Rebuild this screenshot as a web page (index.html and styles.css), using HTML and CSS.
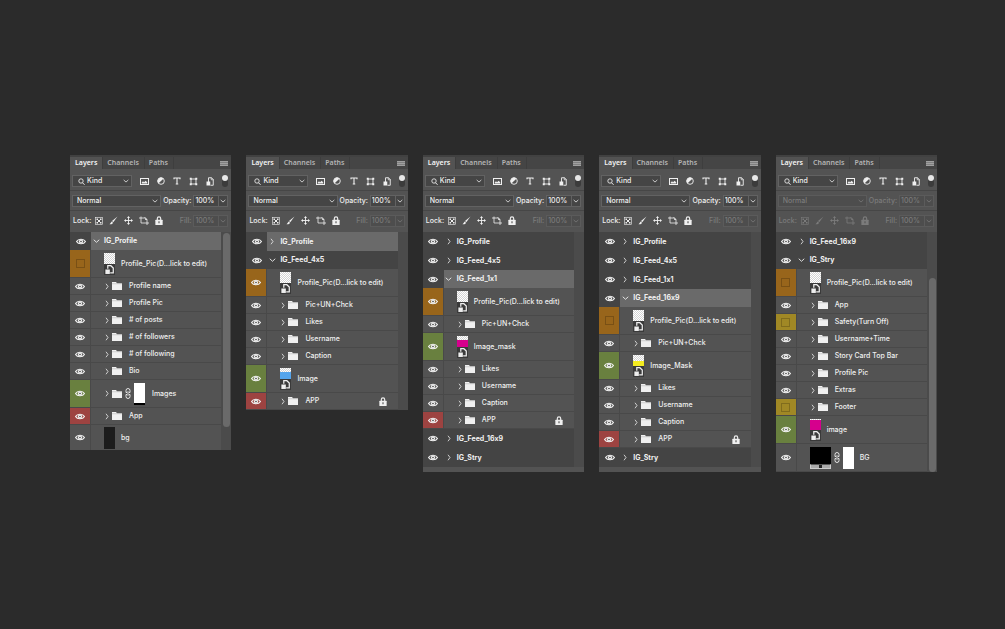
FILE: index.html
```html
<!DOCTYPE html>
<html lang="en">
<head>
  <meta charset="UTF-8"/>
  <meta name="viewport" content="width=device-width, initial-scale=1.0"/>
  <title>Layers</title>
  <link rel="stylesheet" href="styles.css">
</head>
<body>

  <svg class="sprite" aria-hidden="true">
    <symbol id="eye" viewBox="0 0 18 12">
      <path d="M1 6C4 0.6 14 0.6 17 6C14 11.4 4 11.4 1 6Z" fill="none" stroke="currentColor" stroke-width="2.2"/>
      <circle cx="9" cy="6" r="3.8" fill="currentColor"/>
      <circle cx="9" cy="6" r="1.5" fill="#444"/>
    </symbol>
    <symbol id="right" viewBox="0 0 8 14"><path d="M2 1.5L6 7L2 12.5" fill="none" stroke="currentColor" stroke-width="1.6"/></symbol>
    <symbol id="down" viewBox="0 0 14 8"><path d="M1.5 1.5L7 6.5L12.5 1.5" fill="none" stroke="currentColor" stroke-width="1.8"/></symbol>
    <symbol id="folder" viewBox="0 0 20 16"><path d="M0 0H8L10 2.5H20V16H0Z" fill="currentColor"/><path d="M0 3.5H20" stroke="#aaa" stroke-width="1"/></symbol>
    <symbol id="lock" viewBox="0 0 14 16">
      <path d="M4 7V4.5a3 3 0 0 1 6 0V7" fill="none" stroke="currentColor" stroke-width="2"/>
      <rect x="0.5" y="6.5" width="13" height="9.5" rx="1" fill="currentColor"/>
      <path d="M7 9.5V13" stroke="#555" stroke-width="2"/>
    </symbol>
    <symbol id="link" viewBox="0 0 12 22">
      <path d="M2 9V5a4 4 0 0 1 8 0v4M2 13v4a4 4 0 0 0 8 0v-4M6 6.5v9M2 9h2M8 9h2M2 13h2M8 13h2" fill="none" stroke="currentColor" stroke-width="1.8"/>
    </symbol>
    <symbol id="search" viewBox="0 0 14 14"><circle cx="6" cy="6" r="4.4" fill="none" stroke="currentColor" stroke-width="1.7"/><path d="M9 9.5L13 13.5" stroke="currentColor" stroke-width="2"/></symbol>
    <symbol id="pixel" viewBox="0 0 18 14"><rect x="1" y="1" width="16" height="12" fill="none" stroke="currentColor" stroke-width="2"/><path d="M3.5 11V9L6 6.5L8 8.5L11.5 5.5L14.5 9V11Z" fill="currentColor"/></symbol>
    <symbol id="adjust" viewBox="0 0 16 16"><circle cx="8" cy="8" r="6.6" fill="none" stroke="currentColor" stroke-width="1.8"/><path d="M12.7 3.3A6.6 6.6 0 0 0 3.3 12.7Z" fill="currentColor"/></symbol>
    <symbol id="type" viewBox="0 0 16 16"><path d="M2 4.5V2H14V4.5M8 2V14M5.5 14H10.5" fill="none" stroke="currentColor" stroke-width="2.2"/></symbol>
    <symbol id="shape" viewBox="0 0 18 18"><path d="M4 4H14V14H4Z" fill="none" stroke="currentColor" stroke-width="1.8"/><path d="M1.5 1.5h4v4h-4zM12.5 1.5h4v4h-4zM1.5 12.5h4v4h-4zM12.5 12.5h4v4h-4z" fill="currentColor"/></symbol>
    <symbol id="smart" viewBox="0 0 16 18"><path d="M5 10V1.5H11L14.5 5V16.5H9" fill="none" stroke="currentColor" stroke-width="1.8"/><path d="M10.5 1V5.5H15" fill="none" stroke="currentColor" stroke-width="1.4"/><path d="M1 9H8.5V17H1Z" fill="currentColor"/></symbol>
    <symbol id="checker" viewBox="0 0 16 16"><rect x="1" y="1" width="14" height="14" fill="none" stroke="currentColor" stroke-width="1.2"/><path d="M3 3h3v3H3zM10 3h3v3h-3zM6 6h4v4H6zM3 10h3v3H3zM10 10h3v3h-3z" fill="currentColor"/></symbol>
    <symbol id="brush" viewBox="0 0 18 18"><path d="M17 1L8.5 12.5L6 10Z" fill="currentColor"/><path d="M5.5 11L8 13.3C7 16.5 4 17 1 16.5C3.5 15 3 12.5 5.5 11Z" fill="currentColor"/></symbol>
    <symbol id="move" viewBox="0 0 18 18"><path d="M9 2V16M2 9H16" stroke="currentColor" stroke-width="1.8"/><path d="M9 0L12 4H6ZM9 18L12 14H6ZM0 9L4 6V12ZM18 9L14 6V12Z" fill="currentColor"/></symbol>
    <symbol id="artboard" viewBox="0 0 20 18"><path d="M4 1V14M0 4H12M4 14H20M16 8V18" fill="none" stroke="currentColor" stroke-width="1.6"/><path d="M11 2L16 7" stroke="currentColor" stroke-width="1.6"/><path d="M12.5 8V3.5L17 8Z" fill="currentColor"/></symbol>
    <symbol id="object" viewBox="0 0 16 16"><rect width="16" height="16" fill="#3a3a3a"/><path d="M5.5 7V2.5H10L13.5 6V13H9" fill="none" stroke="#eee" stroke-width="1.8"/><path d="M2 8H8.5V14.5H2Z" fill="#eee"/></symbol>
  </svg>

  <main class="board" id="board"></main>

  <script src="script.js"></script>
</body>
</html>
```
FILE: styles.css
```css
* {
  box-sizing: border-box;
  margin: 0;
  padding: 0;
}

body {
  font-family: Inter, "Liberation Sans", sans-serif;
  font-size: 7px;
  font-weight: 500;
  font-variant-ligatures: no-contextual;
  line-height: 10px;
  background: #2b2b2b;
  color: #f0f0f0;
  min-height: 100vh;
}

button, input, select {
  font: inherit;
  color: inherit;
  background: none;
  border: none;
  border-radius: 0;
  appearance: none;
  min-width: 0;
}

button {
  display: flex;
  align-items: center;
  justify-content: center;
}

select:disabled, input:disabled {
  opacity: 1;
}

svg {
  display: block;
  flex: none;
}

.sprite {
  display: none;
}

.board {
  display: flex;
  align-items: flex-start;
  gap: 15px;
  padding: 155px 68px 40px 70px;
}

.panel {
  flex: 1;
  min-width: 161px;
  background: #535353;
  border-top: 2px solid #414141;
}

/* tabs */
.tabs {
  display: flex;
  height: 12px;
  background: #454545;
  font-family: "Noto Sans", sans-serif;
  font-weight: 600;
  color: #b4b4b4;
}

.tab {
  padding: 0 5px 0 4px;
  border-right: 1px solid #3e3e3e;
}

.tab.active {
  padding: 0 5px;
  background: #535353;
  color: #f5f5f5;
}

.menu-btn {
  margin-left: auto;
  padding: 0 3px;
}

.menu-btn span {
  width: 8px;
  height: 5px;
  background: repeating-linear-gradient(#a0a0a0 0 1px, #808080 1px 2px);
}

/* toolbars */
.bar {
  display: flex;
  align-items: center;
  height: 20px;
  padding: 0 3px 0 2px;
  border-bottom: 1px solid #464646;
}

.filter-bar {
  height: 22px;
  padding-top: 3px;
}

.lock-bar {
  height: 21px;
  padding-bottom: 2px;
  border-bottom: none;
}

.field {
  display: flex;
  align-items: center;
  height: 12px;
  background: #454545;
  border: 1px solid #626262;
}

.field select {
  flex: 1;
  height: 10px;
}

.kind {
  width: 60px;
  padding: 0 2px 0 5px;
  gap: 2px;
}

.blend {
  flex: 1;
  padding: 0 2px 0 4px;
  margin-right: 2px;
}

.filters {
  display: flex;
  flex: 1;
  align-items: center;
  justify-content: space-between;
  padding-left: 8px;
}

.switch {
  width: 6px;
  height: 12px;
  border-radius: 3px;
  background: #3c3c3c;
  align-items: flex-start;
}

.switch span {
  width: 6px;
  height: 6px;
  border-radius: 3px;
  background: #e8e8e8;
}

.percent {
  width: 35px;
  margin-left: 2px;
}

.percent input {
  width: 24px;
  height: 10px;
  padding-left: 1px;
}

.percent button {
  flex: 1;
  height: 10px;
  border-left: 1px solid #626262;
}

.locks {
  display: flex;
  flex: 1;
  align-items: center;
  gap: 6px;
  padding-left: 4px;
}

.lock-label {
  padding-left: 1px;
}

.off {
  color: #7b7b7b;
}

.off .field, .field.off {
  background: #4d4d4d;
  border-color: #5b5b5b;
}

.off .percent button, .percent.off button {
  border-color: #5b5b5b;
}

/* layer list */
.body {
  display: flex;
  padding-bottom: 5px;
}

.body.flush {
  padding-bottom: 0;
}

.list {
  flex: 1;
  list-style: none;
  min-width: 0;
}

.track {
  width: 10px;
  padding: 1px 1px 0 2px;
  background: #4b4b4b;
}

.thumb {
  width: 7px;
  border-radius: 4px;
  background: #6a6a6a;
}

.row {
  display: flex;
  height: 17px;
  border-bottom: 1px solid #494949;
}

.row.tall {
  height: 28px;
}

.row.cut {
  height: 25px;
  overflow: hidden;
  border-bottom: none;
}

.row.group {
  height: 18px;
  font-weight: 700;
  background: #444;
  border-bottom: none;
}

.row.closed {
  height: 19px;
}

.row.selected .cell {
  background: #6a6a6a;
}

.eye {
  width: 21px;
  border-right: 1px solid #494949;
}

.group .eye {
  border-right: none;
}

.orange .eye { background: #98651b; }
.green .eye { background: #69803f; }
.red .eye { background: #9d4341; }
.yellow .eye { background: #a08825; }

.blank {
  width: 9px;
  height: 9px;
  border: 1px solid rgba(0, 0, 0, 0.2);
}

.cell {
  display: flex;
  flex: 1;
  align-items: center;
  min-width: 0;
  padding-left: 13px;
  white-space: nowrap;
}

.group .cell {
  padding-left: 1px;
}

.arrow {
  width: 6px;
  height: 10px;
  margin-right: 2px;
}

.group .arrow {
  width: 8px;
  margin-right: 4px;
}

.name {
  padding-left: 7px;
}

.group .name {
  padding-left: 0;
}

.has-thumb .name {
  padding-left: 6px;
}

.has-link .link {
  margin: 0 3px;
}

.locked {
  margin-left: auto;
  margin-right: 11px;
}

.pic {
  display: flex;
  flex: none;
  flex-direction: column;
  justify-content: flex-end;
  width: 11px;
  height: 22px;
  background: #333;
}

.pic.art {
  background: repeating-conic-gradient(#d4d4d4 0 25%, #fff 0 50%) 0 0 / 2px 2px;
}

.swatch {
  flex: 1;
  margin-top: 4px;
}

.swatch.blue { background: #55a5ec; }
.swatch.pink { background: #d6008d; }
.swatch.yolk { background: #f4ec20; margin-top: 6px; }
.swatch.magenta { background: #d6008d; margin-top: 1px; }

.pic.mask {
  background: #fff;
}

.pic.mask.foot {
  border-bottom: 2px solid #000;
}

.pic.dark {
  background: #1c1c1c;
}

.pic.wide {
  width: 21px;
  background: #000;
}

.slider {
  height: 5px;
  border: 1px solid #ccc;
  border-top-color: #555;
  background: linear-gradient(90deg, #aaa 40%, #222 40% 60%, #aaa 60%);
}
```
FILE: script.js
```js
const icon = (id, w, h, cls = "") =>
  `<svg class="${cls}" width="${w}" height="${h}" aria-hidden="true"><use href="#${id}"/></svg>`;

const group = (name, state = "closed") => ({ type: "group", name, state });
const sub = (name, opts = {}) => ({ type: "sub", name, ...opts });
const pic = (name, opts = {}) => ({ type: "pic", name, ...opts });

const profilePic = (hidden) => pic("Profile_Pic(D...lick to edit)", { color: "orange", hidden, swatch: "" });
const app = sub("APP", { color: "red", locked: true });

const panels = [
  {
    thumb: [0, 194], flush: true,
    rows: [
      group("IG_Profile", "open selected"), profilePic(true),
      sub("Profile name"), sub("Profile Pic"), sub("# of posts"), sub("# of followers"),
      sub("# of following"), sub("Bio"), sub("Images", { color: "green", mask: true }),
      sub("App", { color: "red" }), pic("bg", { kind: "dark" })
    ]
  },
  {
    flush: true,
    rows: [
      group("IG_Profile", "closed selected"), group("IG_Feed_4x5", "open"), profilePic(false),
      sub("Pic+UN+Chck"), sub("Likes"), sub("Username"), sub("Caption"),
      pic("Image", { color: "green", swatch: "blue" }), app
    ]
  },
  {
    rows: [
      group("IG_Profile"), group("IG_Feed_4x5"), group("IG_Feed_1x1", "open selected"), profilePic(false),
      sub("Pic+UN+Chck"), pic("Image_mask", { color: "green", swatch: "pink" }),
      sub("Likes"), sub("Username"), sub("Caption"), app, group("IG_Feed_16x9"), group("IG_Stry")
    ]
  },
  {
    rows: [
      group("IG_Profile"), group("IG_Feed_4x5"), group("IG_Feed_1x1"),
      group("IG_Feed_16x9", "open selected"), profilePic(true),
      sub("Pic+UN+Chck"), pic("Image_Mask", { color: "green", swatch: "yolk" }),
      sub("Likes"), sub("Username"), sub("Caption"), app, group("IG_Stry")
    ]
  },
  {
    thumb: [45, 194], off: true, flush: true,
    rows: [
      group("IG_Feed_16x9"), group("IG_Stry", "open"), profilePic(true),
      sub("App"), sub("Safety(Turn Off)", { color: "yellow", hidden: true }), sub("Username+Time"),
      sub("Story Card Top Bar"), sub("Profile Pic"), sub("Extras"),
      sub("Footer", { color: "yellow", hidden: true }),
      pic("image", { color: "green", swatch: "magenta" }), pic("BG", { kind: "fill" })
    ]
  }
];

function rowContent(row) {
  if (row.type === "group") {
    const arrow = row.state.includes("open") ? icon("down", 7, 4) : icon("right", 4, 7);
    return `<button class="arrow" aria-label="Toggle ${row.name}">${arrow}</button>`;
  }
  if (row.type === "sub") {
    const mask = row.mask ? icon("link", 6, 11, "link") + `<span class="pic mask foot"></span>` : "";
    return `<button class="arrow" aria-label="Toggle ${row.name}">${icon("right", 4, 7)}</button>` +
      icon("folder", 10, 8) + mask;
  }
  if (row.kind === "dark") return `<span class="pic dark"></span>`;
  if (row.kind === "fill") {
    return `<span class="pic wide"><span class="slider"></span></span>` +
      icon("link", 6, 11, "link") + `<span class="pic mask"></span>`;
  }
  return `<span class="pic art"><span class="swatch ${row.swatch}"></span>${icon("object", 11, 11)}</span>`;
}

function renderRow(row) {
  const cls = ["row"];
  if (row.type === "group") cls.push("group", row.state);
  if (row.type === "pic" || row.mask) cls.push("tall");
  if (row.type === "pic") cls.push("has-thumb");
  if (row.mask || row.kind === "fill") cls.push("has-link");
  if (row.kind === "dark") cls.push("cut");
  if (row.color) cls.push(row.color);

  return `
    <li class="${cls.join(" ")}">
      <button class="eye" aria-label="Visibility of ${row.name}">${row.hidden ? '<span class="blank"></span>' : icon("eye", 10, 7)}</button>
      <div class="cell">
        ${rowContent(row)}<span class="name">${row.name}</span>
        ${row.locked ? icon("lock", 8, 9, "locked") : ""}
      </div>
    </li>`;
}

function renderPanel(panel, i) {
  const off = panel.off ? "off" : "";
  const dis = panel.off ? "disabled" : "";
  return `
    <section class="panel">
      <div class="tabs">
        <button class="tab active">Layers</button>
        <button class="tab">Channels</button>
        <button class="tab">Paths</button>
        <button class="menu-btn" aria-label="Panel menu"><span></span></button>
      </div>
      <div class="bar filter-bar">
        <div class="field kind">
          ${icon("search", 7, 7)}
          <select aria-label="Filter type"><option>Kind</option></select>
          ${icon("down", 6, 4)}
        </div>
        <div class="filters">
          <button aria-label="Pixel layers">${icon("pixel", 9, 7)}</button>
          <button aria-label="Adjustment layers">${icon("adjust", 8, 8)}</button>
          <button aria-label="Type layers">${icon("type", 8, 8)}</button>
          <button aria-label="Shape layers">${icon("shape", 9, 9)}</button>
          <button aria-label="Smart objects">${icon("smart", 8, 9)}</button>
          <button class="switch" aria-label="Filtering on or off"><span></span></button>
        </div>
      </div>
      <div class="bar ${off}">
        <div class="field blend">
          <select aria-label="Blend mode" ${dis}><option>Normal</option></select>
          ${icon("down", 6, 4)}
        </div>
        <label for="opacity-${i}">Opacity:</label>
        <div class="field percent">
          <input id="opacity-${i}" type="text" value="100%" ${dis}>
          <button aria-label="Opacity slider" ${dis}>${icon("down", 6, 4)}</button>
        </div>
      </div>
      <div class="bar lock-bar ${off}">
        <span class="lock-label">Lock:</span>
        <div class="locks">
          <button aria-label="Lock transparent pixels">${icon("checker", 8, 8)}</button>
          <button aria-label="Lock image pixels">${icon("brush", 9, 9)}</button>
          <button aria-label="Lock position">${icon("move", 9, 9)}</button>
          <button aria-label="Lock artboard nesting">${icon("artboard", 10, 9)}</button>
          <button aria-label="Lock all">${icon("lock", 8, 9)}</button>
        </div>
        <label class="off" for="fill-${i}">Fill:</label>
        <div class="field percent off">
          <input id="fill-${i}" type="text" value="100%" disabled>
          <button aria-label="Fill slider" disabled>${icon("down", 6, 4)}</button>
        </div>
      </div>
      <div class="body ${panel.flush ? "flush" : ""}">
        <ul class="list">${panel.rows.map(renderRow).join("")}</ul>
        <div class="track">
          ${panel.thumb ? `<div class="thumb" style="margin-top: ${panel.thumb[0]}px; height: ${panel.thumb[1]}px"></div>` : ""}
        </div>
      </div>
    </section>`;
}

document.getElementById("board").innerHTML = panels.map(renderPanel).join("");
```
